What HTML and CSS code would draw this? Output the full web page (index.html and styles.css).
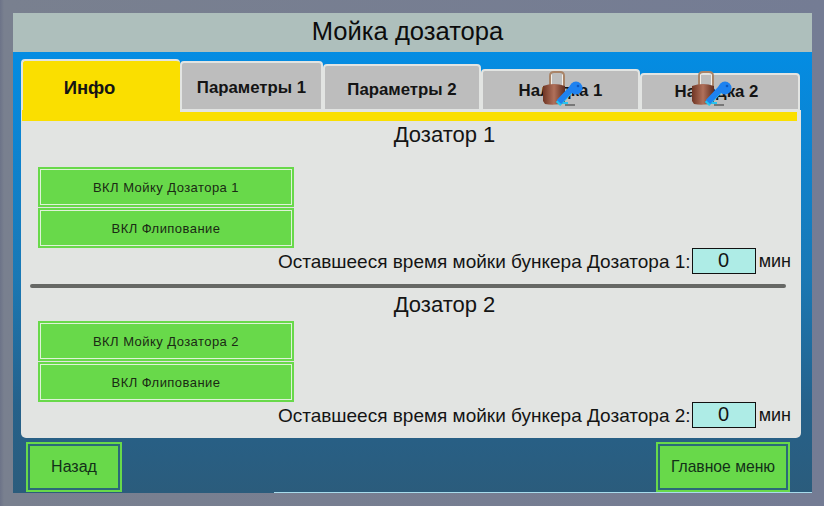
FILE: index.html
```html
<!DOCTYPE html>
<html lang="ru">
<head>
<meta charset="utf-8">
<title>Мойка дозатора</title>
<link rel="stylesheet" href="styles.css">
</head>
<body>
<main class="screen">
  <h1 class="header">Мойка дозатора</h1>
  <div class="content">
    <section class="panel">
      <nav class="tabs">
        <div class="tab tab-active">Инфо</div>
        <div class="tab tab-p1">Параметры 1</div>
        <div class="tab tab-p2">Параметры 2</div>
        <div class="tab tab-n1">Наладка 1
          <svg class="lock" viewBox="0 0 40 35" aria-hidden="true">
            <defs><linearGradient id="b1"><stop offset="0" stop-color="#6f3524"/><stop offset=".5" stop-color="#b0705a"/><stop offset="1" stop-color="#5f2c1e"/></linearGradient></defs>
            <path d="M7 15V5Q7 1 11 1H17Q21 1 21 5V15" fill="none" stroke="#a98468" stroke-width="2"/>
            <path d="M8.500 15V3.500M19.500 15V3.500" fill="none" stroke="#f3eee8"/>
            <path d="M0 15Q11 11 22 15V32Q11 35 2 33L0 30Z" fill="url(#b1)"/>
            <path d="M22 33H32V35H22Z" fill="#777"/>
            <path d="M15 33L31 16" fill="none" stroke="#28c4ee" stroke-width="6"/>
            <path d="M16 31L31 15" fill="none" stroke="#1e82f0" stroke-width="6"/>
            <path d="M20 31H25V33H20Z" fill="#28c4ee"/>
            <circle cx="33" cy="17" r="6.500" fill="#1e82f0"/>
            <circle cx="35" cy="15" r="1.300" fill="#0b58c0"/>
          </svg>
        </div>
        <div class="tab tab-n2">Наладка 2
          <svg class="lock" viewBox="0 0 40 35" aria-hidden="true">
            <defs><linearGradient id="b2"><stop offset="0" stop-color="#6f3524"/><stop offset=".5" stop-color="#b0705a"/><stop offset="1" stop-color="#5f2c1e"/></linearGradient></defs>
            <path d="M7 15V5Q7 1 11 1H17Q21 1 21 5V15" fill="none" stroke="#a98468" stroke-width="2"/>
            <path d="M8.500 15V3.500M19.500 15V3.500" fill="none" stroke="#f3eee8"/>
            <path d="M0 15Q11 11 22 15V32Q11 35 2 33L0 30Z" fill="url(#b2)"/>
            <path d="M22 33H32V35H22Z" fill="#777"/>
            <path d="M15 33L31 16" fill="none" stroke="#28c4ee" stroke-width="6"/>
            <path d="M16 31L31 15" fill="none" stroke="#1e82f0" stroke-width="6"/>
            <path d="M20 31H25V33H20Z" fill="#28c4ee"/>
            <circle cx="33" cy="17" r="6.500" fill="#1e82f0"/>
            <circle cx="35" cy="15" r="1.300" fill="#0b58c0"/>
          </svg>
        </div>
      </nav>
      <div class="strip"></div>
      <div class="body">
        <h2 class="title">Дозатор 1</h2>
        <div class="btns btns-first">
          <div class="btn">ВКЛ Мойку Дозатора 1</div>
          <div class="btn">ВКЛ Флипование</div>
        </div>
        <div class="time">
          <span>Оставшееся время мойки бункера Дозатора 1:</span>
          <span class="value">0</span>
          <span class="unit">мин</span>
        </div>
        <div class="divider"></div>
        <h2 class="title title-2">Дозатор 2</h2>
        <div class="btns btns-second">
          <div class="btn">ВКЛ Мойку Дозатора 2</div>
          <div class="btn">ВКЛ Флипование</div>
        </div>
        <div class="time">
          <span>Оставшееся время мойки бункера Дозатора 2:</span>
          <span class="value">0</span>
          <span class="unit">мин</span>
        </div>
      </div>
    </section>
    <footer class="footer">
      <div class="nav nav-back">Назад</div>
      <div class="nav nav-home">Главное меню</div>
    </footer>
  </div>
</main>
</body>
</html>
```
FILE: styles.css
```css
* { box-sizing: border-box; }
html, body { margin: 0; height: 100%; }
body {
  width: 824px;
  height: 506px;
  overflow: hidden;
  padding: 13px 12px 13px 13px;
  background: linear-gradient(90deg, #6c7388 0, #79808f 4px, #747c94 100%);
  font-family: "Liberation Sans", Arial, sans-serif;
  color: #111;
}
.screen {
  position: relative;
  height: 480px;
  display: flex;
  flex-direction: column;
  background: linear-gradient(180deg, #0090ea 0, #0a86d6 22%, #1a78b4 55%, #26618a 82%, #2b5c7c 100%);
}
.screen::after {
  content: "";
  position: absolute;
  left: 261px;
  right: 0;
  bottom: 0;
  height: 1px;
  background: #a8dcec;
}
.header {
  margin: 0;
  height: 39px;
  flex: none;
  background: #aebfbc;
  font-size: 25.6px;
  font-weight: 400;
  line-height: 37px;
  text-align: center;
  padding-right: 10px;
  color: #0c0c0c;
}
.content {
  flex: 1;
  display: flex;
  flex-direction: column;
  padding: 7px 11px 0 8px;
}
.panel {
  height: 379px;
  flex: none;
  display: flex;
  flex-direction: column;
}
.tabs {
  display: flex;
  align-items: flex-end;
  height: 51px;
  flex: none;
}
.tab {
  position: relative;
  display: flex;
  align-items: center;
  justify-content: center;
  padding-top: 4px;
  background: #bdbdbd;
  border: 2px solid #e2e4e2;
  border-bottom-width: 1px;
  border-radius: 4px 4px 0 0;
  font-size: 16.8px;
  font-weight: 700;
  color: #141414;
}
.tab-active {
  width: 159px;
  height: 51px;
  border-bottom: 0;
  border-right-width: 0;
  background: #fadf00;
  font-size: 18.5px;
  padding: 5px 24px 0 0;
}
.tab-p1 { width: 143px; height: 49px; }
.tab-p2 { width: 158px; height: 46px; }
.tab-n1 { width: 159px; height: 41px; padding-top: 1px; }
.tab-n2 { width: 160px; height: 37px; padding: 0 7px 0 0; }
.tab-n1 .lock { left: 60px; top: 0; }
.tab-n2 .lock { left: 50px; top: -4px; }
.lock {
  position: absolute;
  width: 40px;
  height: 35px;
}
.strip {
  height: 11px;
  flex: none;
  border-right: 4px solid #e2e4e2;
  border-left: 1px solid #e2e4e2;
  background: linear-gradient(#e2e4e2, #e2e4e2) 158px 0 / 100% 2px no-repeat, #fadf00;
}
.body {
  flex: 1;
  background: #e2e4e2;
  border-radius: 0 0 5px 5px;
  padding: 0 10px 0 9px;
  display: flex;
  flex-direction: column;
}
.title {
  margin: 0;
  font-size: 22px;
  font-weight: 400;
  line-height: 28px;
  text-align: center;
  padding-left: 68px;
  color: #141414;
}
.title-2 { margin-top: 3px; }
.btns {
  display: flex;
  flex-direction: column;
  gap: 1px;
  width: 256px;
  margin-left: 8px;
}
.btns-first { margin-top: 18px; }
.btns-second { margin-top: 2px; }
.btn {
  height: 40px;
  display: flex;
  align-items: center;
  justify-content: center;
  background: #68d94a;
  border: 2px solid #68d94a;
  outline: 1px solid #dff3d8;
  outline-offset: -3px;
  font-size: 13px;
  color: #1a2a14;
  letter-spacing: .45px;
}
.time {
  display: flex;
  align-items: center;
  justify-content: flex-end;
  height: 26px;
  font-size: 19px;
  color: #141414;
}
.time span:first-child { padding-top: 1px; }
.value {
  width: 64px;
  height: 26px;
  margin-left: 1px;
  background: #aeece6;
  border: 1px solid #111;
  font-size: 20px;
  line-height: 22px;
  text-align: center;
}
.unit { margin-left: 3px; padding-top: 1px; font-size: 18px; }
.divider {
  height: 4px;
  flex: none;
  margin: 10px 5px 0 0;
  border-radius: 2px;
  background: #666865;
}
.footer {
  flex: 1;
  display: flex;
  justify-content: space-between;
  align-items: flex-start;
  padding: 4px 11px 0 5px;
}
.nav {
  position: relative;
  z-index: 1;
  height: 50px;
  display: flex;
  align-items: center;
  justify-content: center;
  background: #68d94a;
  border: 2px solid #68d94a;
  outline: 2px solid #2b6a78;
  outline-offset: -4px;
  font-size: 16px;
  color: #123018;
}
.nav-back { width: 96px; }
.nav-home { width: 134px; font-size: 15.7px; }
```
